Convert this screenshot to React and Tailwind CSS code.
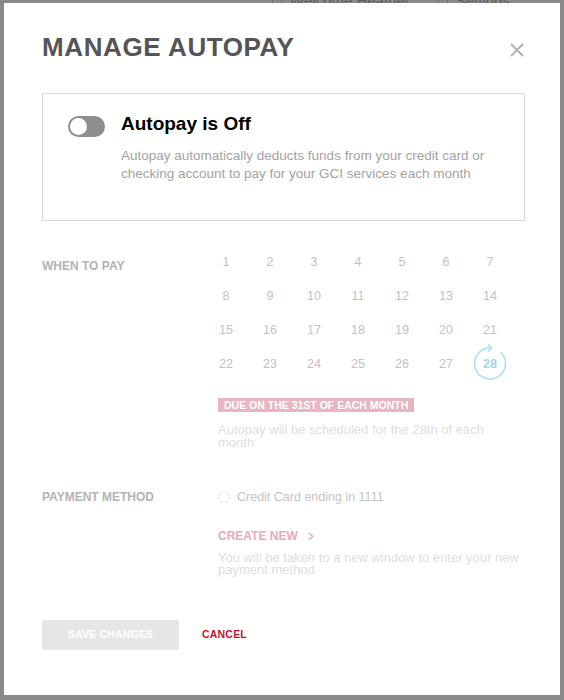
import { useState } from "react";

const days = Array.from({ length: 28 }, (_, i) => i + 1);

const RepeatRing = () => (
  <svg
    width="38"
    height="38"
    viewBox="0 0 38 38"
    className="absolute left-1/2 top-1/2 -translate-x-1/2 -translate-y-[54%]"
    fill="none"
    stroke="#a9def6"
    strokeWidth="1.6"
    strokeLinecap="round"
    strokeLinejoin="round"
  >
    <path d="M29.96 9.04 A15.5 15.5 0 1 1 20.35 4.56" />
    <path d="M17.6 1.6 L20.5 4.5 L17.6 7.4" />
  </svg>
);

const App = () => {
  const [autopay, setAutopay] = useState(false);
  const [selectedDay] = useState(28);

  return (
    <div className="relative w-full h-[700px] overflow-hidden bg-[#8a8a8a] font-['Liberation_Sans',Arial,sans-serif]">
      {/* page behind the overlay */}
      <div className="flex justify-end gap-7 pr-[54px] -mt-[10px] text-[15px] text-[#5c5c5c]">
        <span className="flex items-center gap-2">
          <span className="w-[10px] h-[10px] border border-[#6a6a6a]" />
          Welcome Heather
        </span>
        <span className="flex items-center gap-2">
          <span className="w-[10px] h-[10px] border border-[#6a6a6a]" />
          Settings
        </span>
      </div>

      {/* Modal */}
      <div className="absolute left-[4px] top-[3px] w-[556px] h-[692px] bg-white pt-[28px] pl-[38px] pr-[35px]">
        <h2 className="text-[26px] leading-[32px] font-bold tracking-[0.6px] text-[#555555]">
          MANAGE AUTOPAY
        </h2>
        <button className="absolute right-[36px] top-[40px] w-[14px] h-[14px]">
          <svg width="14" height="14" viewBox="0 0 14 14" stroke="#b0b0b0" strokeWidth="1.8">
            <path d="M1 1 L13 13 M13 1 L1 13" />
          </svg>
        </button>

        {/* Toggle box */}
        <div className="mt-[30px] border border-[#dadada] pt-[18px] pl-[25px] pr-4 pb-[37px] flex">
          <button
            onClick={() => setAutopay(!autopay)}
            className="mt-[4px] w-[37px] h-[21px] rounded-full bg-[#8e8e8e] flex items-center px-[2px] shrink-0"
          >
            <span className="w-[17px] h-[17px] rounded-full bg-white" />
          </button>
          <div className="ml-[16px]">
            <h3 className="text-[19px] leading-[24px] font-bold text-black">
              Autopay is {autopay ? "On" : "Off"}
            </h3>
            <p className="mt-[11px] text-[13.5px] leading-[18px] text-[#a3a3a3]">
              Autopay automatically deducts funds from your credit card or
              <br />
              checking account to pay for your GCI services each month
            </p>
          </div>
        </div>

        {/* When to pay */}
        <div className="mt-[26px] flex">
          <div className="w-[176px] shrink-0 mt-[11px] text-[12px] leading-[16px] font-bold text-[#b3b3b3]">
            WHEN TO PAY
          </div>
          <div className="flex-1">
            <div className="-ml-[7px] grid grid-cols-[repeat(7,30px)] gap-x-[14px] gap-y-[4px]">
              {days.map((day) =>
                day === selectedDay ? (
                  <div
                    key={day}
                    className="relative h-[30px] flex items-center justify-center text-[12.5px] font-bold text-[#9fd7f2]"
                  >
                    <RepeatRing />
                    {day}
                  </div>
                ) : (
                  <div
                    key={day}
                    className="h-[30px] flex items-center justify-center text-[12.5px] text-[#c2c2c2]"
                  >
                    {day}
                  </div>
                ),
              )}
            </div>
            <span className="mt-[19px] inline-block bg-[#e7b6c0] px-[6px] text-[10.5px] leading-[14px] font-bold text-white">
              DUE ON THE 31ST OF EACH MONTH
            </span>
            <p className="mt-[7px] w-[296px] text-[13px] leading-[13px] text-[#dedede]">
              Autopay will be scheduled for the 28th of each month
            </p>
          </div>
        </div>

        {/* Payment method */}
        <div className="mt-[40px] flex">
          <div className="w-[176px] shrink-0 text-[12px] leading-[16px] font-bold text-[#b3b3b3]">
            PAYMENT METHOD
          </div>
          <div className="flex-1">
            <label className="flex items-center gap-[7px] text-[12.5px] leading-[16px] text-[#c4c4c4]">
              <span className="w-[12px] h-[12px] rounded-full border border-[#e8e8e8]" />
              Credit Card ending in 1111
            </label>
            <button className="mt-[23px] flex items-center gap-[10px] text-[12px] leading-[16px] font-bold text-[#e9a9b6]">
              CREATE NEW
              <svg width="6" height="9" viewBox="0 0 6 9" fill="none" stroke="#e9a9b6" strokeWidth="1.4">
                <path d="M1 1 L4.8 4.5 L1 8" />
              </svg>
            </button>
            <p className="mt-[8px] w-[312px] text-[13px] leading-[12px] text-[#dedede]">
              You will be taken to a new window to enter your new payment method
            </p>
          </div>
        </div>

        {/* Actions */}
        <div className="mt-[44px] flex items-center">
          <button
            disabled
            className="w-[137px] h-[30px] rounded-[2px] bg-[#e5e6e8] text-[10.5px] font-bold text-white tracking-[0.2px]"
          >
            SAVE CHANGES
          </button>
          <button className="ml-[23px] text-[10.5px] font-bold text-[#c8102e] tracking-[0.2px]">
            CANCEL
          </button>
        </div>
      </div>
    </div>
  );
};

export default App;
